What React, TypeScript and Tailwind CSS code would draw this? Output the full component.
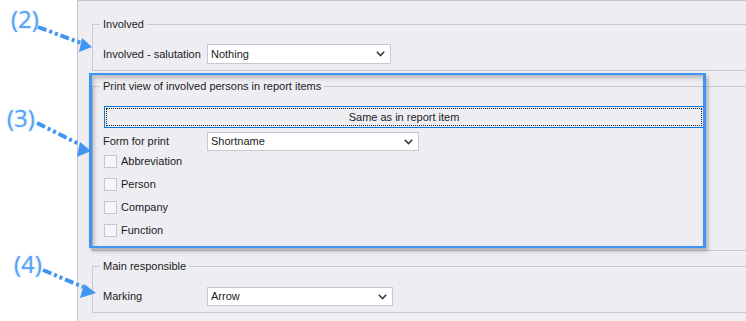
import React from "react";

function Chevron() {
  return (
    <svg width="9" height="6" viewBox="0 0 9 6" className="shrink-0">
      <polyline points="0.8,0.8 4.5,4.5 8.2,0.8" fill="none" stroke="#3a3a3a" strokeWidth="1.6" />
    </svg>
  );
}

function Select({ value, w, h }: { value: string; w: string; h: string }) {
  return (
    <div className={`${w} ${h} flex items-center justify-between bg-white border border-[#c8c8d4] pl-[3px] pr-[5px]`}>
      <span>{value}</span>
      <Chevron />
    </div>
  );
}

function Legend({ text }: { text: string }) {
  return (
    <div className="absolute -top-[9px] left-[7px] px-[3px] bg-[#eeeef2] leading-[16px]">{text}</div>
  );
}

function Check({ label }: { label: string }) {
  return (
    <div className="flex items-center h-[13px] gap-[4px] ml-[1px]">
      <div className="w-[13px] h-[13px] border border-[#c6c6ce] bg-[#f6f6f8]" />
      <span className="leading-[13px]">{label}</span>
    </div>
  );
}

export default function App() {
  return (
    <div className="relative w-[746px] h-[321px] overflow-hidden flex bg-white font-['Liberation_Sans',Arial,sans-serif] text-[11px] text-[#1b1b1b]">
      <div className="w-[77px] shrink-0 bg-white" />
      <div className="flex-1 bg-[#eeeef2] border-l border-t border-[#c6c6d0] pt-[23px] pl-[14px]">
        {/* Involved */}
        <div className="relative h-[47px] border-y border-l border-[#c9c9d6] pt-[19px] pl-[10px]">
          <Legend text="Involved" />
          <div className="flex items-center">
            <div className="w-[104px]">Involved - salutation</div>
            <Select value="Nothing" w="w-[184px]" h="h-[20px]" />
          </div>
        </div>

        {/* Print view */}
        <div className="relative mt-[15px] h-[165px] border-y border-l border-[#c9c9d6] pt-[19px] pl-[10px]">
          <Legend text="Print view of involved persons in report items" />
          <div className="ml-[1px] w-[600px] h-[22px] border border-[#0a78d7] bg-[#eeeef2] p-[1px]">
            <div className="w-full h-full border border-dotted border-[#222] flex items-center justify-center">
              Same as in report item
            </div>
          </div>
          <div className="flex items-center mt-[4px]">
            <div className="w-[104px]">Form for print</div>
            <Select value="Shortname" w="w-[212px]" h="h-[19px]" />
          </div>
          <div className="flex flex-col gap-[10px] mt-[4px]">
            <Check label="Abbreviation" />
            <Check label="Person" />
            <Check label="Company" />
            <Check label="Function" />
          </div>
        </div>

        {/* Main responsible */}
        <div className="relative mt-[15px] h-[47px] border-y border-l border-[#c9c9d6] pt-[20px] pl-[10px]">
          <Legend text="Main responsible" />
          <div className="flex items-center">
            <div className="w-[104px]">Marking</div>
            <Select value="Arrow" w="w-[186px]" h="h-[19px]" />
          </div>
        </div>
      </div>

      {/* annotation: blue highlight box */}
      <div className="absolute left-[89px] top-[73px] w-[617px] h-[175px] border-x-[3px] border-y-2 border-[#3f95f2] shadow-[2px_3px_4px_rgba(0,0,0,0.28),inset_2px_3px_4px_rgba(0,0,0,0.22)] pointer-events-none" />

      {/* annotation labels */}
      <div className="absolute left-[11px] top-[3px] text-[24px] leading-[32px] font-normal font-['Open_Sans',sans-serif] text-[#55a3f4] [text-shadow:0_0_2px_rgba(74,156,242,0.5)]">(2)</div>
      <div className="absolute left-[7px] top-[102px] text-[24px] leading-[32px] font-normal font-['Open_Sans',sans-serif] text-[#55a3f4] [text-shadow:0_0_2px_rgba(74,156,242,0.5)]">(3)</div>
      <div className="absolute left-[14px] top-[248px] text-[24px] leading-[32px] font-normal font-['Open_Sans',sans-serif] text-[#55a3f4] [text-shadow:0_0_2px_rgba(74,156,242,0.5)]">(4)</div>

      {/* annotation arrows */}
      <svg className="absolute left-0 top-0 pointer-events-none" width="746" height="321" viewBox="0 0 746 321">
        <defs>
          <filter id="glow" x="-20%" y="-20%" width="140%" height="140%">
            <feGaussianBlur stdDeviation="0.6" />
          </filter>
        </defs>
        <g filter="url(#glow)" fill="#3f95f2" stroke="#3f95f2">
          <line x1="38" y1="27" x2="81" y2="43" strokeWidth="4" strokeDasharray="9 3 3 3 3 3" fill="none" />
          <polygon points="92,47 82,38 79,52" stroke="none" />
          <line x1="37" y1="123" x2="79" y2="144" strokeWidth="4" strokeDasharray="9 3 3 3 3 3" fill="none" />
          <polygon points="91,151 80,142 77,157" stroke="none" />
          <line x1="43" y1="270" x2="83" y2="287" strokeWidth="4" strokeDasharray="9 3 3 3 3 3" fill="none" />
          <polygon points="96,293 84,284 80,298" stroke="none" />
        </g>
      </svg>
    </div>
  );
}
